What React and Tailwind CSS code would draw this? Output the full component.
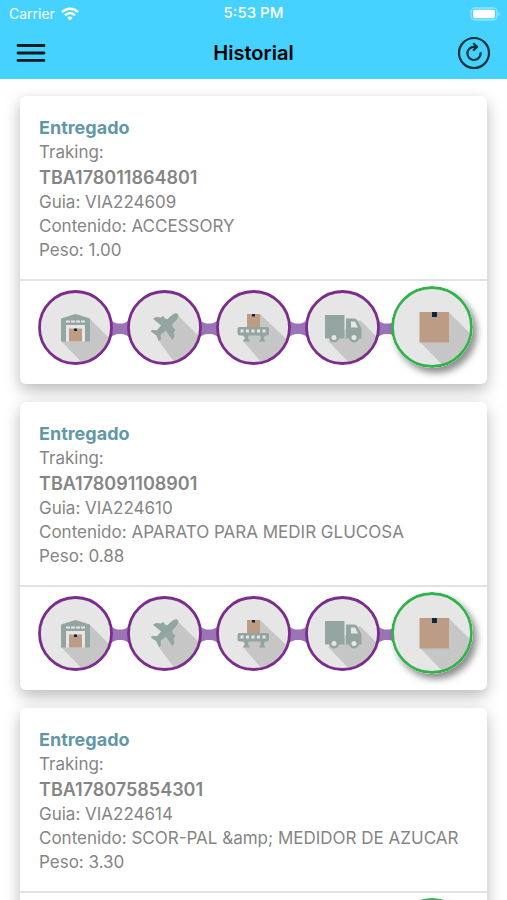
const parcels = [
  { status: "Entregado", tracking: "TBA178011864801", guide: "VIA224609", content: "ACCESSORY", weight: "1.00" },
  { status: "Entregado", tracking: "TBA178091108901", guide: "VIA224610", content: "APARATO PARA MEDIR GLUCOSA", weight: "0.88" },
  { status: "Entregado", tracking: "TBA178075854301", guide: "VIA224614", content: "SCOR-PAL &amp; MEDIDOR DE AZUCAR", weight: "3.30" },
];

const GREY = "#93a5a1";
const BOX = "#bd9c85";
const NAVY = "#0d2740";
const SHADE = "#c6c6c6";
const DISC = "#e6e6e6";

function Warehouse() {
  return (
    <>
      <path d="M52 29 L82 59 L60 89 L23 51 Z" fill={SHADE} />
      <path d="M23 28.5 L37.5 24 L52 28.5 V51.5 H47 V35 H28 V51.5 H23 Z" fill={GREY} />
      <path d="M28 31.5 H47" stroke={DISC} strokeWidth="2" strokeDasharray="4 1" />
      <path d="M28 35 H47 V51.5 H28 Z" fill={DISC} />
      <rect x="31" y="38.5" width="13" height="13" fill={BOX} />
      <rect x="36" y="38.5" width="3" height="2.5" fill={NAVY} />
    </>
  );
}

function Plane() {
  return (
    <>
      <path d="M50.500 25 L84 58 L60 89 L31 50 L38 40 Z" fill={SHADE} />
      <path
        d="M50.500 24.200 C48.500 22.800 46 24.500 44 26.300 L40.500 29.500 L36.500 28.500 L37.200 27.300 L35.700 26.500 L34 28 L29.500 27.300 L26.500 28.800 L34.500 35.500 L30 40.800 L25 40.200 L24.300 41.500 L29.500 45 L32 50.500 L33.500 49.500 L33.400 45 L38.800 40 L45.500 49.500 L47 46.500 L46.400 42 L48 40.200 L47 38.500 L45.700 39 L44.800 34.500 L48.500 30.500 C50.500 28 51.800 25.800 50.500 24.200 Z"
        fill={GREY}
        stroke={GREY}
        strokeWidth="0.8"
        strokeLinejoin="round"
      />
    </>
  );
}

function Conveyor() {
  return (
    <>
      <path d="M44 24 L84 62 L60 89 L27 51 Z" fill={SHADE} />
      <rect x="31" y="24" width="13" height="13" fill={BOX} />
      <rect x="36" y="24" width="3" height="2.500" fill={NAVY} />
      <path d="M26 44 H33 L32 48 L34 51.500 H27 L29 48 Z M43 44 H50 L47.500 48 L49.500 51.500 H43 L45 48 Z" fill={GREY} />
      <rect x="21.500" y="37" width="31.500" height="8.500" rx="2" fill={GREY} />
      <path d="M24.500 41 H51" stroke={DISC} strokeWidth="3" strokeDasharray="3 2.500" />
    </>
  );
}

function Truck() {
  return (
    <>
      <path d="M55 30 L86 61 L60 89 L23 51 Z" fill={SHADE} />
      <path d="M20 25 H39.500 V48.500 H20 Z" fill={GREY} />
      <path d="M41 28.500 H49 C51 28.500 52 29.500 53 31.500 L56.500 38.500 V48.500 H41 Z" fill={GREY} />
      <path d="M46 31.500 H50 L53 37.500 H46 Z" fill={DISC} />
      <circle cx="29" cy="47.500" r="5" fill={GREY} />
      <circle cx="29" cy="47.500" r="2.500" fill={DISC} />
      <circle cx="49" cy="47.500" r="5" fill={GREY} />
      <circle cx="49" cy="47.500" r="2.500" fill={DISC} />
    </>
  );
}

const steps = [
  { name: "Almacén", Art: Warehouse },
  { name: "Vuelo", Art: Plane },
  { name: "Clasificación", Art: Conveyor },
  { name: "Reparto", Art: Truck },
];

function Step({ name, Art, clip }) {
  return (
    <svg viewBox="0 0 75 75" className="relative size-[75px] shrink-0" role="img" aria-label={name}>
      <clipPath id={clip}>
        <circle cx="37.5" cy="37.5" r="36" />
      </clipPath>
      <g clipPath={`url(#${clip})`}>
        <rect width="75" height="75" fill={DISC} />
        <Art />
      </g>
      <circle cx="37.5" cy="37.5" r="36" fill="none" stroke="#7b2d8b" strokeWidth="2.8" />
    </svg>
  );
}

function Delivered({ clip }) {
  return (
    <svg
      viewBox="0 0 82 82"
      className="relative -ml-[3px] size-[82px] shrink-0 rounded-full shadow-[4px_5px_7px_rgba(0,0,0,0.45)]"
      role="img"
      aria-label="Entregado"
    >
      <clipPath id={clip}>
        <circle cx="41" cy="41" r="39.500" />
      </clipPath>
      <g clipPath={`url(#${clip})`}>
        <rect width="82" height="82" fill={DISC} />
        <path d="M57.500 26 L92 60 L66 94 L29 56 Z" fill={SHADE} />
        <rect x="28.500" y="26" width="29.500" height="30.500" fill={BOX} />
        <rect x="41" y="26" width="5" height="5" fill={NAVY} />
      </g>
      <circle cx="41" cy="41" r="39.500" fill="none" stroke="#2fb34a" strokeWidth="2.8" />
    </svg>
  );
}

function Connector() {
  return (
    <svg viewBox="0 0 22 24" className="-mx-1 mt-1 h-6 w-[22px] shrink-0" aria-hidden="true">
      <path d="M0 1 C5 6.500 8 6.500 11 6.500 C14 6.500 17 6.500 22 1 V22 C17 17 14 17 11 17 C8 17 5 17 0 22 Z" fill="#9b74b8" />
    </svg>
  );
}

function ParcelCard({ parcel, index }) {
  return (
    <article className="rounded-md bg-white shadow-[0_6px_16px_rgba(0,0,0,0.28)]">
      <div className="border-b-2 border-[#e2e2e2] px-[19px] pt-[19px] pb-[17px] text-[17px] leading-6 text-[#858585]">
        <h2 className="text-lg leading-[25px] font-bold text-[#6298a5]">{parcel.status}</h2>
        <p className="leading-[25px]">
          Traking:
          <strong className="block text-lg leading-[25px] font-semibold">{parcel.tracking}</strong>
        </p>
        <p>Guia: {parcel.guide}</p>
        <p>Contenido: {parcel.content}</p>
        <p>Peso: {parcel.weight}</p>
      </div>
      <div className="flex items-center justify-center pt-[5px] pb-4 pl-1">
        {steps.map((step) => (
          <div key={step.name} className="flex items-center">
            <Step name={step.name} Art={step.Art} clip={`disc-${index}-${step.name}`} />
            <Connector />
          </div>
        ))}
        <Delivered clip={`disc-${index}-final`} />
      </div>
    </article>
  );
}

export default function App() {
  return (
    <div className="h-screen overflow-hidden bg-white font-[Inter,'Liberation_Sans',sans-serif]">
      <header className="relative z-10 bg-[#45d2ff]">
        <div className="grid h-[27px] grid-cols-3 items-center px-1.5 text-white">
          <div className="flex items-center gap-1.5 pl-[3px] text-sm">
            <span>Carrier</span>
            <svg viewBox="0 0 18 14" className="h-3.5 w-[18px]" aria-hidden="true">
              <path d="M1 5.200 C5.500 0.600 12.500 0.600 17 5.200" fill="none" stroke="white" strokeWidth="2.400" />
              <path d="M4 8.300 C7 5.500 11 5.500 14 8.300" fill="none" stroke="white" strokeWidth="2.300" />
              <path d="M6.300 10.700 C8 9.200 10 9.200 11.700 10.700 L9 13.500 Z" fill="white" />
            </svg>
          </div>
          <span className="text-center text-[15px] font-medium">5:53 PM</span>
          <svg viewBox="0 0 32 14" className="h-3.5 w-8 justify-self-end" aria-hidden="true">
            <rect x="2" y="1" width="26" height="12" rx="4" fill="none" stroke="#8fe3ff" strokeWidth="1.400" />
            <rect x="4" y="2.800" width="22" height="8.400" rx="2" fill="white" />
            <path d="M29.500 5 C31 5.500 31 8.500 29.500 9 Z" fill="#a5e9ff" />
          </svg>
        </div>
        <div className="flex h-[52px] items-center justify-between px-4">
          <button type="button" aria-label="Menú" className="w-[34px]">
            <svg viewBox="0 0 30 20" className="h-5 w-[30px]" aria-hidden="true">
              <path d="M2 2.500 H28 M2 10 H28 M2 17.400 H28" stroke="#101a1e" strokeWidth="2.800" strokeLinecap="round" />
            </svg>
          </button>
          <h1 className="text-xl font-semibold text-black">Historial</h1>
          <button type="button" aria-label="Actualizar">
            <svg viewBox="0 0 34 34" className="size-[34px]" fill="none" stroke="#10303b" strokeWidth="2.200" aria-hidden="true">
              <circle cx="17" cy="17" r="15" />
              <path d="M19.500 10.800 H17 A6.600 6.600 0 1 0 23.600 17" strokeLinecap="round" />
              <path d="M16.800 7.800 L20 10.900 L16.800 14" strokeLinecap="round" strokeLinejoin="round" />
            </svg>
          </button>
        </div>
      </header>
      <main className="flex flex-col gap-[18px] px-5 pt-[17px]">
        {parcels.map((parcel, index) => (
          <ParcelCard key={parcel.tracking} parcel={parcel} index={index} />
        ))}
      </main>
    </div>
  );
}
